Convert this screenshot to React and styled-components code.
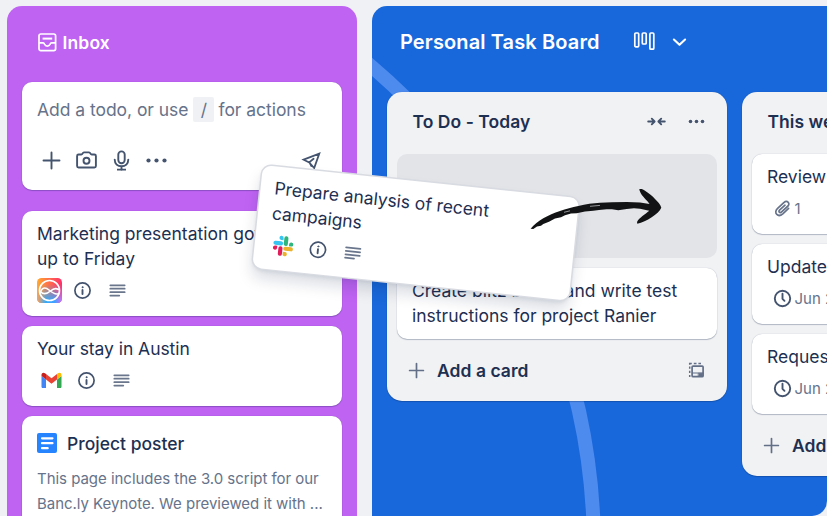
import React from "react";
import styled, { createGlobalStyle } from "styled-components";

const Global = createGlobalStyle`
  * { box-sizing: border-box; }
  html, body { margin: 0; background: #fff; overflow: hidden; }
  body { font-family: Inter, "Liberation Sans", sans-serif; color: #1d3052; }
`;

const Frame = styled.div`
  position: relative;
  display: flex;
  gap: 15px;
  width: 827px;
  height: 516px;
  padding: 6px 0 0 7px;
  overflow: hidden;
  background: #f0f1f4;
`;

const Inbox = styled.section`
  flex: none;
  width: 350px;
  padding: 0 15px;
  border-radius: 15px 15px 0 0;
  background: #bf63f3;
`;

const InboxHeader = styled.header`
  display: flex;
  align-items: center;
  gap: 6px;
  height: 75.5px;
  padding: 0 0 3px 15.5px;
  color: #fff;
  font-size: 17.5px;
  font-weight: 600;
  letter-spacing: 0.15px;
`;

const Card = styled.article`
  height: ${(p) => p.$h}px;
  margin-bottom: ${(p) => p.$gap ?? 10}px;
  padding: ${(p) => p.$top ?? 10}px 15px 0;
  border-radius: 10px;
  background: #fff;
  box-shadow: 0 1px 1px #091e4240, 0 0 1px #091e424f;
  overflow: hidden;
`;

const CardText = styled.p`
  margin: 0;
  font-size: 17.5px;
  line-height: 25px;
  letter-spacing: ${(p) => p.$track ?? 0}px;
  white-space: nowrap;
`;

const Prompt = styled.div`
  display: flex;
  align-items: center;
  height: 26px;
  color: #66738a;
  font-size: 17.5px;
  letter-spacing: -0.04px;
  white-space: nowrap;
`;

const Key = styled.kbd`
  display: flex;
  align-items: center;
  justify-content: center;
  width: 21px;
  height: 25px;
  margin: 0 4px 0 5px;
  border-radius: 2px;
  background: #f0f1f4;
  font-family: inherit;
`;

const IconRow = styled.div`
  display: flex;
  align-items: center;
  gap: 10px;
  margin-top: ${(p) => p.$top ?? 7}px;
  padding: 0 3px 0 2px;
  color: #44546f;

  svg { flex: none; }
`;

const AppLogo = styled.span`
  display: flex;
  margin: 0 -2.5px 0 -2px;
`;

const Spacer = styled.span`
  flex: 1;
`;

const PosterTitle = styled.h3`
  display: flex;
  align-items: center;
  gap: 10px;
  height: 25px;
  margin: 0 0 10px;
  font-size: 17.5px;
  font-weight: 500;
`;

const PosterText = styled.p`
  margin: 0;
  color: #66738a;
  font-size: 15px;
  line-height: 25px;
  letter-spacing: -0.03px;
  white-space: nowrap;
`;

const Board = styled.section`
  position: relative;
  flex: 1;
  min-width: 0;
  height: 509.5px;
  border-radius: 15px 0 15px 0;
  background: #1868db;
  overflow: hidden;
`;

const Swoosh = styled.svg`
  position: absolute;
  inset: 0;
`;

const BoardHeader = styled.header`
  position: relative;
  display: flex;
  align-items: center;
  gap: 10px;
  height: 85.5px;
  padding: 0 0 14px 28px;
  color: #fff;
`;

const BoardTitle = styled.h1`
  width: 222px;
  margin: 0;
  font-size: 20px;
  font-weight: 600;
  letter-spacing: 0.12px;
  white-space: nowrap;
`;

const Lists = styled.div`
  position: relative;
  display: flex;
  align-items: flex-start;
  gap: 15px;
  padding-left: 15px;
`;

const List = styled.section`
  flex: none;
  width: 340px;
  height: ${(p) => p.$h}px;
  padding: 0 10px;
  border-radius: 15px;
  background: #f1f2f4;
  box-shadow: 0 1px 1px #091e4240, 0 0 1px #091e424f;
`;

const ListHeader = styled.header`
  display: flex;
  align-items: center;
  gap: 15px;
  height: 62px;
  padding: 0 8px 2px 15.5px;
  color: #44546f;
`;

const ListTitle = styled.h2`
  flex: 1;
  margin: 0;
  color: #1d3052;
  font-size: 17.5px;
  font-weight: 600;
  letter-spacing: 0.04px;
  white-space: nowrap;
`;

const DropZone = styled.div`
  height: 104.5px;
  margin-bottom: 10px;
  border-radius: 10px;
  background: #e2e4e8;
`;

const Meta = styled.div`
  display: flex;
  align-items: center;
  height: 25px;
  margin-top: 7px;
  padding-left: 2.5px;
  color: #66738a;
  font-size: 15px;
  white-space: nowrap;
`;

const ClockTone = styled.span`
  display: flex;
  color: #44546f;
`;

const AddRow = styled.footer`
  display: flex;
  align-items: center;
  gap: 8px;
  height: 44px;
  padding: 0 8px 0 7px;
  color: #626f86;
`;

const AddLabel = styled.span`
  flex: 1;
  color: #1d3052;
  font-size: 17.5px;
  font-weight: 600;
  letter-spacing: 0.04px;
  white-space: nowrap;
`;

const DraggedCard = styled.article`
  position: absolute;
  left: 262.7px;
  top: 165.2px;
  width: 318px;
  height: 102.5px;
  padding: 8.5px 14px 0;
  border-radius: 9px;
  background: #fff;
  box-shadow: 0 0 0 1.5px #d9dbe2, 0 10px 15px #091e4226, 0 2px 4px #091e421a;
  transform: rotate(6deg);
  transform-origin: 0 0;
`;

const HandArrow = styled.svg`
  position: absolute;
  left: 526px;
  top: 184px;
`;

const Icon = ({ size = 25, w = 1.9, children }) => (
  <svg width={size} height={size} viewBox="0 0 25 25" fill="none" stroke="currentColor" strokeWidth={w} strokeLinecap="round" strokeLinejoin="round">
    {children}
  </svg>
);

const PlusIcon = ({ r = 8, w = 1.9 }) => (
  <Icon w={w}><path d={`M12.5 ${12.5 - r}v${2 * r}M${12.5 - r} 12.5h${2 * r}`} /></Icon>
);
const InboxIcon = () => (
  <svg width="19" height="19" viewBox="0 0 19 19" fill="none" stroke="currentColor" strokeWidth="1.7" strokeLinejoin="round">
    <rect x="1" y="1" width="16.6" height="16.6" rx="1.8" />
    <path d="M4.6 5.6h9.6" strokeWidth="2" />
    <path d="M1.2 9.9h4c.8 0 1 .5 1.4 1.4.5 1.3 1.4 1.9 2.7 1.9s2.200-.6 2.700-1.900c.4-.9.7-1.400 1.400-1.400h4" />
  </svg>
);
const CameraIcon = () => (
  <Icon>
    <path d="M4.600 6.500h2.600c.7 0 1-.3 1.300-.9.4-.8.700-1.200 1.500-1.200h5c.8 0 1.100.4 1.500 1.200.3.600.6.900 1.300.9h2.600c1 0 1.500.6 1.500 1.500v10c0 1-.5 1.500-1.500 1.500H4.600c-1 0-1.500-.5-1.500-1.500V8c0-.9.500-1.500 1.500-1.500z" />
    <circle cx="12.500" cy="12.700" r="3" />
  </Icon>
);
const MicIcon = () => (
  <Icon>
    <rect x="9.300" y="3.400" width="6.400" height="11.800" rx="3.200" />
    <path d="M5.700 11.600c0 4.200 2.900 6.700 6.800 6.700s6.800-2.500 6.800-6.700M12.500 18.500v3" />
    <path d="M8 21.600h9" strokeLinecap="butt" />
  </Icon>
);
const DotsIcon = ({ r = 2.1, gap = 8 }) => (
  <Icon>
    <g fill="currentColor" stroke="none">
      <circle cx={12.5 - gap} cy="12.500" r={r} /><circle cx="12.500" cy="12.500" r={r} /><circle cx={12.5 + gap} cy="12.500" r={r} />
    </g>
  </Icon>
);
const SendIcon = () => (
  <Icon w={1.8}>
    <path d="M20.300 5.600 4.600 11.700l5.600 2.700 5 5.600zM10.200 14.400l4.400-3.600M10.500 14.600l1.900 3.400" strokeLinejoin="miter" />
  </Icon>
);
const InfoIcon = () => (
  <Icon w={1.7}>
    <circle cx="12.500" cy="12.500" r="7.600" />
    <path d="M12.500 12v4" strokeWidth="1.900" />
    <circle cx="12.500" cy="9.200" r=".55" fill="currentColor" strokeWidth=".9" />
  </Icon>
);
const LinesIcon = () => (
  <Icon w={1.7}>
    <path d="M5.300 7.300h14.400M5.300 10.700h14.400M5.300 14.200h14.400M5.300 17.600h9" opacity=".8" />
  </Icon>
);
const ClockIcon = () => (
  <ClockTone><Icon w={1.9}><circle cx="12.500" cy="12.500" r="7.700" /><path d="M12.500 7.800v5l2 2" /></Icon></ClockTone>
);
const ClipIcon = () => (
  <Icon w={1.700}>
    <path d="m15 9.200-5.200 4.700c-.9.800-1.100 1.700-.5 2.300.7.700 1.500.5 2.300-.3l5.900-5.400c1.500-1.400 1.800-3.100.7-4.200-1.300-1.300-2.900-.9-4.400.4l-6.200 5.700c-2.100 2-2.400 4.400-.8 6 1.700 1.700 3.900 1.200 6-.6l5.800-5.400" />
  </Icon>
);
const BoardIcon = () => (
  <Icon w={1.700}>
    <rect x="2.800" y="4" width="3.900" height="13.800" rx="1" /><rect x="10.300" y="4" width="3.900" height="11" rx="1" /><rect x="17.900" y="4" width="3.900" height="16.200" rx="1" />
  </Icon>
);
const ChevronIcon = () => <Icon w={2.100}><path d="m6.900 10.500 5.600 5.300 5.600-5.300" /></Icon>;
const CollapseIcon = () => (
  <Icon w={1.900}>
    <path d="M4.200 12.500h6M7.800 9.700l2.800 2.800-2.800 2.800M20.800 12.500h-6M17.200 9.700l-2.800 2.800 2.800 2.800" />
  </Icon>
);
const TemplateIcon = () => (
  <Icon w={1.700}>
    <rect x="8.100" y="8.100" width="11" height="10.600" rx="1" />
    <path d="M8.500 15h10.500" strokeWidth="1.200" />
    <path d="M14.500 15.200h4.300v3h-4.300z" fill="currentColor" strokeWidth=".6" />
    <path d="M5.700 18.900v-2M5.700 15v-2.300M5.700 10.700V8.400M5.700 6.700V5.500h2.100M9.800 5.500h2.700M14.400 5.500h2.600" strokeLinecap="butt" strokeLinejoin="miter" strokeWidth="1.500" />
  </Icon>
);
const DocIcon = () => (
  <svg width="20" height="20" viewBox="0 0 20 20">
    <rect width="20" height="20" rx="2" fill="#2684ff" />
    <path d="M5 5.300h10.500M5 10.200h10.500M5 15.200h5.700" stroke="#fff" strokeWidth="2.200" strokeLinecap="round" />
  </svg>
);
const GmailIcon = () => (
  <svg width="25" height="25" viewBox="0 0 25 25">
    <path d="M2.500 8v10.800c0 .8.600 1.200 1.200 1.200H7v-8.600z" fill="#4285f4" />
    <path d="M22.500 8v10.800c0 .8-.6 1.200-1.200 1.200H18v-8.600z" fill="#34a853" />
    <path d="M18 6v5.500L22.500 8V6.800c0-2-2-2.800-3.500-1.600z" fill="#fbbc04" />
    <path d="m7 6 5.500 4.300L18 6v5.500l-5.500 4.200L7 11.500z" fill="#ea4335" />
    <path d="M2.500 6.800V8L7 11.500V6l-1-.8C4.500 4 2.500 4.800 2.500 6.800z" fill="#c5221f" />
  </svg>
);
const LoopIcon = () => (
  <svg width="25" height="25" viewBox="0 0 25 25">
    <defs>
      <linearGradient id="warm" x1="0" y1="0" x2="1" y2="0"><stop offset="0" stopColor="#ffab2e" /><stop offset=".5" stopColor="#ff6b4d" /><stop offset="1" stopColor="#ff2d6c" /></linearGradient>
      <linearGradient id="cool" x1="0" y1="0" x2="1" y2="0"><stop offset="0" stopColor="#ffa05c" /><stop offset=".35" stopColor="#35a9f7" /><stop offset=".7" stopColor="#3fa0ff" /><stop offset="1" stopColor="#d76cf5" /></linearGradient>
      <linearGradient id="fade" x1="0" y1="0" x2="0" y2="1"><stop offset=".25" stopColor="#000" /><stop offset=".9" stopColor="#fff" /></linearGradient>
      <mask id="lower"><rect width="25" height="25" fill="url(#fade)" /></mask>
    </defs>
    <rect width="25" height="25" rx="4.500" fill="url(#warm)" />
    <rect width="25" height="25" rx="4.500" fill="url(#cool)" mask="url(#lower)" />
    <g fill="none" stroke="#fff" strokeWidth="1.600" strokeLinecap="round">
      <circle cx="12.500" cy="12.500" r="10" />
      <path d="M3 15.500C4.500 9.500 8 8.500 12 12c3 2.600 5.800 5 9.300 3.700M3.500 13.500c3 3.500 6.500 2.500 10-.5 2.500-2.200 5-3.500 8-1.500" />
    </g>
  </svg>
);
const SlackIcon = () => (
  <svg width="25" height="25" viewBox="0 0 25 25">
    <g fill="#36c5f0"><path d="M10.100 2.500a2.100 2.100 0 1 0 0 4.200h2.100V4.600a2.100 2.100 0 0 0-2.100-2.100z" /><rect x="2.500" y="8" width="9.700" height="4.100" rx="2.050" /></g>
    <g fill="#2eb67d"><path d="M22.500 10.100a2.100 2.100 0 1 0-4.200 0v2.100h2.100a2.100 2.100 0 0 0 2.100-2.100z" /><rect x="12.900" y="2.500" width="4.100" height="9.700" rx="2.050" /></g>
    <g fill="#ecb22e"><path d="M14.900 22.500a2.100 2.100 0 1 0 0-4.200h-2.100v2.100c0 1.200 1 2.100 2.100 2.100z" /><rect x="12.900" y="12.900" width="9.700" height="4.100" rx="2.050" /></g>
    <g fill="#e01e5a"><path d="M2.500 14.900a2.100 2.100 0 1 0 4.200 0v-2.100H4.600c-1.200 0-2.100 1-2.100 2.100z" /><rect x="8" y="12.900" width="4.100" height="9.700" rx="2.050" /></g>
  </svg>
);

const DateCard = ({ title, children }) => (
  <Card $h={80}>
    <CardText>{title}</CardText>
    <Meta>{children}</Meta>
  </Card>
);

export default function App() {
  return (
    <>
      <Global />
      <Frame>
        <Inbox>
          <InboxHeader><InboxIcon />Inbox</InboxHeader>
          <Card $h={108.5} $gap={21} $top={14.500}>
            <Prompt>Add a todo, or use<Key>/</Key>for actions</Prompt>
            <IconRow $top={26}>
              <PlusIcon /><CameraIcon /><MicIcon /><DotsIcon /><Spacer /><SendIcon />
            </IconRow>
          </Card>
          <Card $h={104.5} $gap={10.5}>
            <CardText>Marketing presentation got<br />up to Friday</CardText>
            <IconRow>
              <AppLogo><LoopIcon /></AppLogo><InfoIcon /><LinesIcon />
            </IconRow>
          </Card>
          <Card $h={79.5} $gap={10.5}>
            <CardText $track={-0.05}>Your stay in Austin</CardText>
            <IconRow><GmailIcon /><InfoIcon /><LinesIcon /></IconRow>
          </Card>
          <Card $h={130} $top={14.500}>
            <PosterTitle><DocIcon />Project poster</PosterTitle>
            <PosterText>This page includes the 3.0 script for our<br />Banc.ly Keynote. We previewed it with ...</PosterText>
          </Card>
        </Inbox>

        <Board>
          <Swoosh width="455" height="510" viewBox="372 6 455 510" fill="none">
            <circle cx="-38.600" cy="548" r="632.500" stroke="#4d8bee" strokeWidth="14" />
          </Swoosh>
          <BoardHeader>
            <BoardTitle>Personal Task Board</BoardTitle>
            <BoardIcon />
            <ChevronIcon />
          </BoardHeader>
          <Lists>
            <List $h={309}>
              <ListHeader>
                <ListTitle>To Do - Today</ListTitle>
                <CollapseIcon /><DotsIcon r={1.8} gap={6} />
              </ListHeader>
              <DropZone />
              <Card $h={70.5}>
                <CardText>Create blitz board and write test<br />instructions for project Ranier</CardText>
              </Card>
              <AddRow><PlusIcon r={6.900} w={1.700} /><AddLabel>Add a card</AddLabel><TemplateIcon /></AddRow>
            </List>
            <List $h={384}>
              <ListHeader><ListTitle>This week</ListTitle></ListHeader>
              <DateCard title="Review brief"><ClipIcon />1</DateCard>
              <DateCard title="Update plan"><ClockIcon />Jun 24</DateCard>
              <DateCard title="Request assets"><ClockIcon />Jun 26</DateCard>
              <AddRow><PlusIcon r={6.900} w={1.700} /><AddLabel>Add a card</AddLabel></AddRow>
            </List>
          </Lists>
        </Board>

        <DraggedCard>
          <CardText $track={-0.03}>Prepare analysis of recent<br />campaigns</CardText>
          <IconRow><SlackIcon /><InfoIcon /><LinesIcon /></IconRow>
        </DraggedCard>
        <HandArrow width="140" height="50" viewBox="526 184 140 50" fill="#121314">
          <path d="M530.600 228.700C534 225 538.500 221 543.300 218.300C548.500 215.200 554 213 560 211C566 208.800 572 207.300 578.300 206C586 204.300 593 203 600 202.700L612 202.300L626.700 202L640 202.500L649.500 204C646.500 199.500 642 196.500 640.300 192.300L639.200 189.500C640.500 188.400 643 189.200 645 190.700C649 193.300 652.500 196 655 199C657.500 201.500 660.500 204.500 661.300 207.700C660 211 656 214.300 651.700 217.300C647 220.500 642 222.800 637.300 223.700L637 222C639.500 217.500 645 214.500 649.300 210.800L640 208.700L634 208.200L626.700 208.900L618.300 210.200L612 209.300L606.700 209.200L599 209.900L593.300 210.800L585 211.500L576.700 213.300L571 213.500L565 215.200L561 217.200L555 218.500L549 221.700L543.300 224L541 225.800L537 226.600L533.300 228.900Z" />
          <path d="M590 206.300l10-.9M564 212.300l6-1.500" stroke="#c9cbd0" strokeWidth=".7" />
        </HandArrow>
      </Frame>
    </>
  );
}
